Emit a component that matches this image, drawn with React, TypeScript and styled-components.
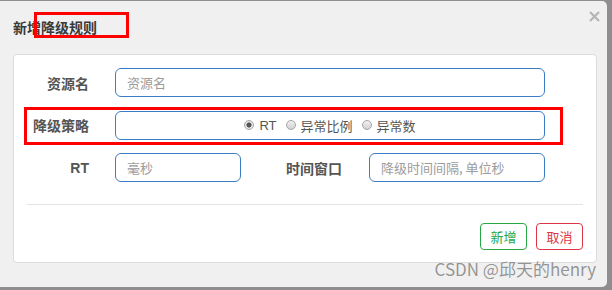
import React from "react";
import styled, { createGlobalStyle } from "styled-components";

const GlobalStyle = createGlobalStyle`
  html, body {
    margin: 0;
    padding: 0;
    background: #8e8e8e;
    font-family: "Liberation Sans", "Noto Sans CJK SC", sans-serif;
  }
  #root { width: 612px; height: 290px; overflow: hidden; }
`;

const Page = styled.div`
  position: relative;
  width: 612px;
  height: 290px;
  overflow: hidden;
  padding-top: 1px;
  box-sizing: border-box;
`;

const Dialog = styled.div`
  width: 607px;
  height: 286px;
  background: #f0f0f0;
  border-radius: 0 5px 5px 0;
  display: flex;
  flex-direction: column;
`;

const Header = styled.div`
  display: flex;
  justify-content: space-between;
  align-items: flex-start;
  height: 53px;
  box-sizing: border-box;
  padding: 10px 7px 0 13px;
`;

const Title = styled.div`
  margin-top: 6px;
  font-size: 14px;
  line-height: 20px;
  font-weight: 700;
  color: #3a3a3a;
  font-family: "Noto Sans CJK SC", sans-serif;
`;

const Close = styled.svg`
  width: 11px;
  height: 11px;
  display: block;
`;

const Panel = styled.div`
  margin: 0 10px 0 13px;
  height: 209px;
  box-sizing: border-box;
  background: #fff;
  border: 1px solid #dcdcdc;
  border-radius: 4px;
  padding: 13px 0 0 0;
  display: flex;
  flex-direction: column;
`;

const Form = styled.div`
  display: flex;
  flex-direction: column;
  gap: 13.5px;
`;

const Row = styled.div`
  display: flex;
  align-items: center;
  height: 29px;
`;

const Label = styled.div<{ $gap?: number }>`
  width: 75px;
  flex: none;
  text-align: right;
  margin-right: ${(p) => p.$gap ?? 26}px;
  font-size: 14px;
  font-weight: 700;
  color: #555;
  font-family: "Liberation Sans", "Noto Sans CJK SC", sans-serif;
`;

const Input = styled.input<{ $w: number; $after?: number }>`
  width: ${(p) => p.$w}px;
  height: 29px;
  flex: none;
  box-sizing: border-box;
  border: 1px solid #3b7dc4;
  border-radius: 6px;
  padding: 0 11px;
  margin: 0 ${(p) => p.$after ?? 0}px 0 0;
  font-size: 13px;
  font-family: "Noto Sans CJK SC", sans-serif;
  color: #555;
  outline: none;
  background: #fff;
  &::placeholder { color: #9c9c9c; }
`;

const RadioBox = styled.div`
  width: 430px;
  height: 29px;
  box-sizing: border-box;
  border: 1px solid #3b7dc4;
  border-radius: 6px;
  display: flex;
  align-items: center;
  justify-content: center;
  gap: 9px;
`;

const RadioItem = styled.label`
  display: flex;
  align-items: center;
  gap: 5px;
  font-size: 13px;
  color: #555;
  font-family: "Liberation Sans", "Noto Sans CJK SC", sans-serif;
`;

const RadioDot = styled.span<{ $checked?: boolean }>`
  width: 10px;
  height: 10px;
  border-radius: 50%;
  box-sizing: border-box;
  border: 1px solid #a5a5a5;
  background: ${(p) =>
    p.$checked
      ? "radial-gradient(circle, #555 0 2.3px, #e6e6e6 2.8px)"
      : "linear-gradient(#f0f0f0, #d2d2d2)"};
`;

const Divider = styled.div`
  margin: 22px 13px 0;
  height: 1px;
  background: #e3e3e3;
`;

const Footer = styled.div`
  display: flex;
  justify-content: flex-end;
  gap: 9px;
  margin: 18px 13px 0;
`;

const Btn = styled.button<{ $color: string }>`
  width: 47px;
  height: 27px;
  box-sizing: border-box;
  background: #fff;
  border: 1px solid ${(p) => p.$color};
  color: ${(p) => p.$color};
  border-radius: 4px;
  font-size: 13px;
  font-family: "Noto Sans CJK SC", sans-serif;
  padding: 0;
`;

const Annotation = styled.div<{ $x: number; $y: number; $w: number; $h: number }>`
  position: absolute;
  left: ${(p) => p.$x}px;
  top: ${(p) => p.$y}px;
  width: ${(p) => p.$w}px;
  height: ${(p) => p.$h}px;
  box-sizing: border-box;
  border: 3px solid #ff0000;
  pointer-events: none;
`;

const Watermark = styled.div`
  position: absolute;
  right: 16px;
  top: 256px;
  font-size: 17px;
  line-height: 26px;
  color: rgba(120, 120, 120, 0.8);
  text-shadow: 0 0 1px rgba(255, 255, 255, 0.8);
  font-family: "Noto Sans CJK SC", sans-serif;
  white-space: nowrap;
`;

export default function App() {
  return (
    <>
      <GlobalStyle />
      <Page>
        <Dialog>
          <Header>
            <Title>新增降级规则</Title>
            <Close viewBox="0 0 11 11">
              <path d="M1 1 L10 10 M10 1 L1 10" stroke="#b5b5b5" strokeWidth="2.2" />
            </Close>
          </Header>
          <Panel>
            <Form>
              <Row>
                <Label>资源名</Label>
                <Input $w={430} placeholder="资源名" />
              </Row>
              <Row>
                <Label>降级策略</Label>
                <RadioBox>
                  <RadioItem>
                    <RadioDot $checked />
                    RT
                  </RadioItem>
                  <RadioItem>
                    <RadioDot />
                    异常比例
                  </RadioItem>
                  <RadioItem>
                    <RadioDot />
                    异常数
                  </RadioItem>
                </RadioBox>
              </Row>
              <Row>
                <Label>RT</Label>
                <Input $w={126} $after={26} placeholder="毫秒" />
                <Label $gap={27}>时间窗口</Label>
                <Input $w={176} placeholder="降级时间间隔, 单位秒" />
              </Row>
            </Form>
            <Divider />
            <Footer>
              <Btn $color="#28a745">新增</Btn>
              <Btn $color="#dc3545">取消</Btn>
            </Footer>
          </Panel>
        </Dialog>
        <Annotation $x={34} $y={12} $w={95} $h={26} />
        <Annotation $x={24} $y={107} $w={539} $h={38} />
        <Watermark>CSDN @邱天的henry</Watermark>
      </Page>
    </>
  );
}
